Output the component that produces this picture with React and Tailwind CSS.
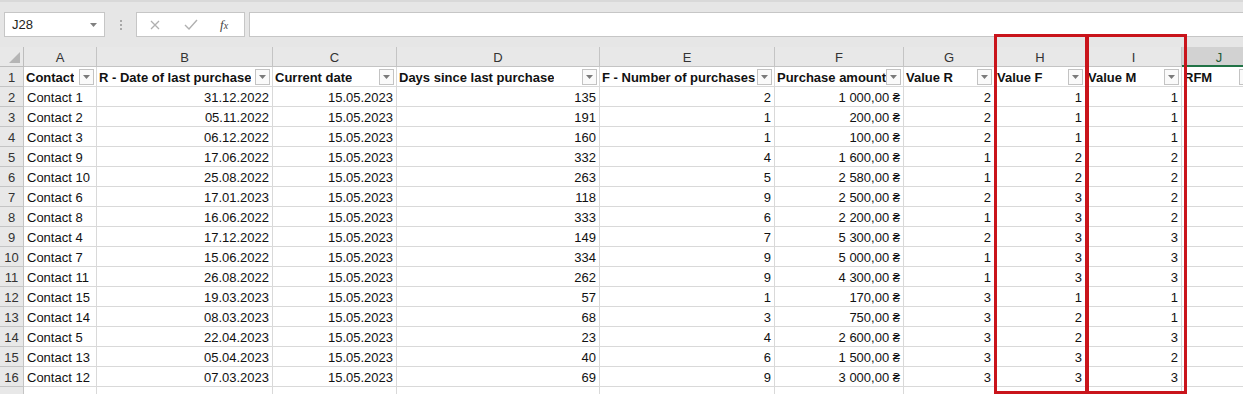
import React from "react";

const rows = [
  ["Contact 1", "31.12.2022", "135", "2", "1 000,00 ₴", "2", "1", "1"],
  ["Contact 2", "05.11.2022", "191", "1", "200,00 ₴", "2", "1", "1"],
  ["Contact 3", "06.12.2022", "160", "1", "100,00 ₴", "2", "1", "1"],
  ["Contact 9", "17.06.2022", "332", "4", "1 600,00 ₴", "1", "2", "2"],
  ["Contact 10", "25.08.2022", "263", "5", "2 580,00 ₴", "1", "2", "2"],
  ["Contact 6", "17.01.2023", "118", "9", "2 500,00 ₴", "2", "3", "2"],
  ["Contact 8", "16.06.2022", "333", "6", "2 200,00 ₴", "1", "3", "2"],
  ["Contact 4", "17.12.2022", "149", "7", "5 300,00 ₴", "2", "3", "3"],
  ["Contact 7", "15.06.2022", "334", "9", "5 000,00 ₴", "1", "3", "3"],
  ["Contact 11", "26.08.2022", "262", "9", "4 300,00 ₴", "1", "3", "3"],
  ["Contact 15", "19.03.2023", "57", "1", "170,00 ₴", "3", "1", "1"],
  ["Contact 14", "08.03.2023", "68", "3", "750,00 ₴", "3", "2", "1"],
  ["Contact 5", "22.04.2023", "23", "4", "2 600,00 ₴", "3", "2", "3"],
  ["Contact 13", "05.04.2023", "40", "6", "1 500,00 ₴", "3", "3", "2"],
  ["Contact 12", "07.03.2023", "69", "9", "3 000,00 ₴", "3", "3", "3"],
];

const headers = [
  "Contact",
  "R - Date of last purchase",
  "Current date",
  "Days since last purchase",
  "F - Number of purchases",
  "Purchase amount",
  "Value R",
  "Value F",
  "Value M",
  "RFM",
];

const letters = ["A", "B", "C", "D", "E", "F", "G", "H", "I", "J"];

function FilterBtn() {
  return (
    <div className="shrink-0 w-[15px] h-[16px] border border-[#c3c3c3] bg-[#fafafa] flex items-center justify-center mr-[2px] -mt-[3px]">
      <svg width="7" height="4" viewBox="0 0 7 4">
        <polygon points="0,0 7,0 3.5,4" fill="#7a7a7a" />
      </svg>
    </div>
  );
}

const rowHead =
  "bg-[#e8e8e8] border-r border-b border-[#c4c4c4] flex items-center justify-center pt-[3px] text-[#333]";
const cell =
  "border-r border-b border-[#d9d9d9] flex items-center pt-[3px] overflow-hidden whitespace-nowrap";

export default function App() {
  return (
    <div className="relative w-[1243px] h-[394px] overflow-hidden bg-white font-['Liberation_Sans','DejaVu_Sans',sans-serif] text-[13px] text-[#111]">
      {/* Formula bar */}
      <div className="h-[47px] bg-[#e6e6e6] border-t-2 border-[#d9d9d9] flex items-start pt-[10px] pl-[4px]">
        <div className="w-[101px] h-[25px] bg-white border border-[#c6c6c6] flex items-center justify-between pl-[7px] pr-[7px]">
          <span className="text-[#222]">J28</span>
          <svg width="7" height="4" viewBox="0 0 7 4">
            <polygon points="0,0 7,0 3.5,4" fill="#808080" />
          </svg>
        </div>
        <div className="ml-[15px] mt-[8px] flex flex-col gap-[2px]">
          <div className="w-[2px] h-[2px] bg-[#a8a8a8]" />
          <div className="w-[2px] h-[2px] bg-[#a8a8a8]" />
          <div className="w-[2px] h-[2px] bg-[#a8a8a8]" />
        </div>
        <div className="ml-[14px] w-[109px] h-[25px] bg-white border border-[#c6c6c6] flex items-center">
          <svg className="ml-[13px]" width="10" height="10" viewBox="0 0 10 10">
            <path d="M1 1 L9 9 M9 1 L1 9" stroke="#b0b0b0" strokeWidth="1.3" fill="none" />
          </svg>
          <svg className="ml-[24px]" width="14" height="11" viewBox="0 0 14 11">
            <path d="M1 6 L5 10 L13 1" stroke="#b0b0b0" strokeWidth="1.4" fill="none" />
          </svg>
          <span className="ml-[22px] font-['Liberation_Serif',serif] italic text-[13px] text-[#444] leading-none">
            f<span className="text-[10px]">x</span>
          </span>
        </div>
        <div className="ml-[4px] flex-1 h-[25px] bg-white border border-[#c6c6c6] border-r-0" />
      </div>

      {/* Grid */}
      <div className="grid grid-cols-[24px_73px_176px_124px_203px_175px_129px_91px_91px_96px_75px] auto-rows-[20px]">
        {/* column header row */}
        <div className="bg-[#e8e8e8] border-r border-b border-[#bdbdbd] relative">
          <svg className="absolute right-[3px] bottom-[3px]" width="11" height="11" viewBox="0 0 11 11">
            <polygon points="11,0 11,11 0,11" fill="#b5b5b5" />
          </svg>
        </div>
        {letters.map((l) =>
          l === "J" ? (
            <div
              key={l}
              className="bg-[#d2d2d2] border-r border-[#c4c4c4] border-b-2 border-b-[#217346] flex items-center justify-center pt-[3px] text-[#1e5a35]"
            >
              {l}
            </div>
          ) : (
            <div
              key={l}
              className="bg-[#e8e8e8] border-r border-b border-[#c4c4c4] flex items-center justify-center pt-[3px] text-[#333]"
            >
              {l}
            </div>
          )
        )}

        {/* row 1 */}
        <div className={rowHead}>1</div>
        {headers.map((h) => (
          <div key={h} className={cell + " justify-between font-bold pl-[2px]"}>
            <span className="overflow-hidden">{h}</span>
            <FilterBtn />
          </div>
        ))}

        {rows.map((r, i) => (
          <React.Fragment key={i}>
            <div className={rowHead}>{i + 2}</div>
            <div className={cell + " pl-[3px]"}>{r[0]}</div>
            <div className={cell + " justify-end pr-[3px]"}>{r[1]}</div>
            <div className={cell + " justify-end pr-[3px]"}>15.05.2023</div>
            <div className={cell + " justify-end pr-[3px]"}>{r[2]}</div>
            <div className={cell + " justify-end pr-[3px]"}>{r[3]}</div>
            <div className={cell + " justify-end pr-[3px]"}>{r[4]}</div>
            <div className={cell + " justify-end pr-[3px]"}>{r[5]}</div>
            <div className={cell + " justify-end pr-[3px]"}>{r[6]}</div>
            <div className={cell + " justify-end pr-[3px]"}>{r[7]}</div>
            <div className={cell}></div>
          </React.Fragment>
        ))}

        {/* row 17 (cut off) */}
        <div className={rowHead}></div>
        {letters.map((l) => (
          <div key={"e" + l} className={cell}></div>
        ))}
      </div>

      {/* Red highlight boxes */}
      <div className="absolute left-[994px] top-[34px] w-[94px] h-[360px] border-[3px] border-[#c9141b]" />
      <div className="absolute left-[1086px] top-[34px] w-[101px] h-[360px] border-[3px] border-[#c9141b]" />
    </div>
  );
}
